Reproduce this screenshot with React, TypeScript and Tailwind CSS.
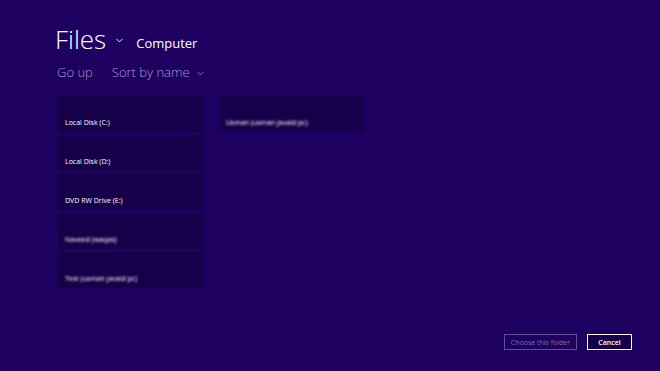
import { ChevronDown } from "lucide-react";

const items = [
  { label: "Local Disk (C:)", blur: false },
  { label: "Local Disk (D:)", blur: false },
  { label: "DVD RW Drive (E:)", blur: false },
  { label: "Naveed (waqas)", blur: true },
  { label: "Test (usman javaid pc)", blur: true },
  { label: "Usman (usman javaid pc)", blur: true },
];

export default function App() {
  return (
    <div className="w-[660px] h-[371px] bg-[#1e0060] text-white font-['Open_Sans',sans-serif] flex flex-col overflow-hidden">
      <div className="flex items-end pl-[55px] pt-[20px] h-[52px]">
        <span className="text-[26px] font-light leading-none">Files</span>
        <ChevronDown className="ml-[8px] mb-[6px] w-[11px] h-[11px]" strokeWidth={2} />
        <span className="ml-[11px] mb-[2px] text-[13px] leading-none">Computer</span>
      </div>
      <div className="flex items-center pl-[57px] mt-[14px] text-[13px] font-light text-[#a99ad6] leading-none">
        <span>Go up</span>
        <span className="ml-[19px]">Sort by name</span>
        <ChevronDown className="ml-[5px] mt-[2px] w-[11px] h-[11px]" strokeWidth={1.5} />
      </div>
      <div className="grid grid-flow-col grid-rows-5 grid-cols-[145px_145px] gap-x-[16px] gap-y-[3px] pl-[58px] mt-[17px] auto-rows-[36px] w-fit">
        {items.map((it) => (
          <div key={it.label} className="h-[36px] bg-[#16004a] flex items-end px-[7px] pb-[6px]">
            <span className={`text-[7px] font-normal leading-none ${it.blur ? "blur-[0.8px] text-white" : ""}`}>{it.label}</span>
          </div>
        ))}
      </div>
      <div className="flex-1" />
      <div className="flex justify-end gap-[10px] pr-[28px] pb-[21px]">
        <button className="w-[73px] h-[16px] border border-[#5f4f99] text-[#7a6db0] text-[7px] leading-none">Choose this folder</button>
        <button className="w-[45px] h-[16px] border border-white bg-[#160048] text-white text-[7px] font-semibold leading-none">Cancel</button>
      </div>
    </div>
  );
}
